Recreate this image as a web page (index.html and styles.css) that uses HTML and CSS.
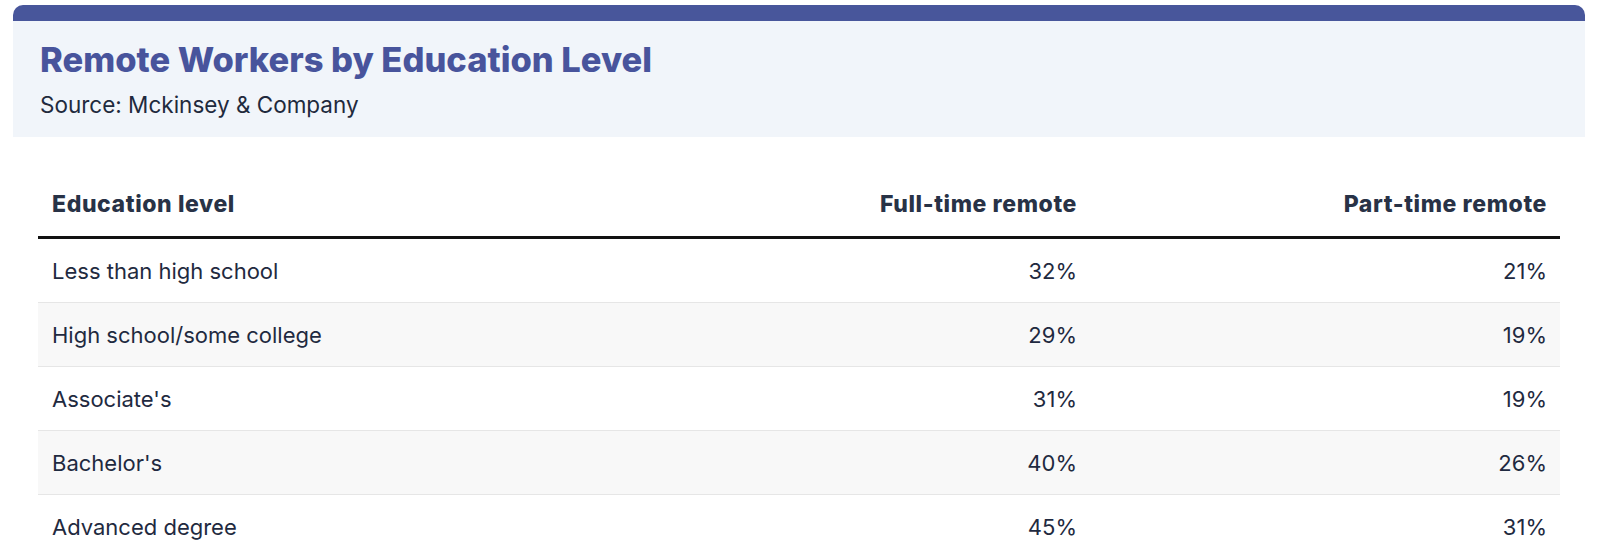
FILE: index.html
```html
<!DOCTYPE html>
<html lang="en">
<head>
<meta charset="utf-8">
<title>Remote Workers by Education Level</title>
<link rel="stylesheet" href="styles.css">
</head>
<body>
<div class="page">
  <section class="card-head">
    <div class="card-bar"></div>
    <div class="card-body">
      <h1 class="title">Remote Workers by Education Level</h1>
      <p class="source">Source: Mckinsey &amp; Company</p>
    </div>
  </section>
  <table class="data">
    <colgroup>
      <col class="c1"><col class="c2"><col class="c3">
    </colgroup>
    <thead>
      <tr><th class="left">Education level</th><th class="num">Full-time remote</th><th class="num">Part-time remote</th></tr>
    </thead>
    <tbody>
      <tr><td>Less than high school</td><td class="num">32%</td><td class="num">21%</td></tr>
      <tr><td>High school/some college</td><td class="num">29%</td><td class="num">19%</td></tr>
      <tr><td>Associate's</td><td class="num">31%</td><td class="num">19%</td></tr>
      <tr><td>Bachelor's</td><td class="num">40%</td><td class="num">26%</td></tr>
      <tr><td>Advanced degree</td><td class="num">45%</td><td class="num">31%</td></tr>
    </tbody>
  </table>
</div>
</body>
</html>
```
FILE: styles.css
```css
html, body {
  margin: 0;
  padding: 0;
  background: #ffffff;
}
body {
  font-family: Inter, "Noto Sans", sans-serif;
  font-variant-ligatures: none;
  color: #1f2a40;
}
.page {
  padding: 5px 15px 0 13px;
  width: 1572px;
}
.card-head {
  width: 1572px;
}
.card-bar {
  height: 16px;
  background: #48569b;
  border-radius: 10px 10px 0 0;
}
.card-body {
  background: #f1f5fa;
  height: 116px;
  box-sizing: border-box;
  padding: 18px 27px 0;
}
.title {
  margin: 0;
  font-size: 34.5px;
  line-height: 42px;
  font-weight: 800;
  color: #48549c;
}
.source {
  margin: 10px 0 0;
  font-size: 22.5px;
  line-height: 28px;
  color: #1f2a3d;
}
.data {
  margin: 35px 0 0 25px;
  width: 1522px;
  border-collapse: collapse;
  table-layout: fixed;
}
.c1 { width: 582px; }
.c2 { width: 470px; }
.c3 { width: 470px; }
th {
  font-size: 23px;
  font-weight: 800;
  letter-spacing: 0.6px;
  color: #283246;
  height: 64px;
  padding: 0 13px 0 14px;
  border-bottom: 3px solid #111111;
  vertical-align: middle;
}
th.left { text-align: left; }
td {
  font-size: 22px;
  height: 63px;
  padding: 0 13px 0 14px;
  border-bottom: 1px solid #e6e6e6;
  vertical-align: middle;
  color: #1f2a40;
}
tbody tr:last-child td { border-bottom: none; }
.num { text-align: right; }
tbody tr:nth-child(even) td { background: #f8f8f8; }
```
